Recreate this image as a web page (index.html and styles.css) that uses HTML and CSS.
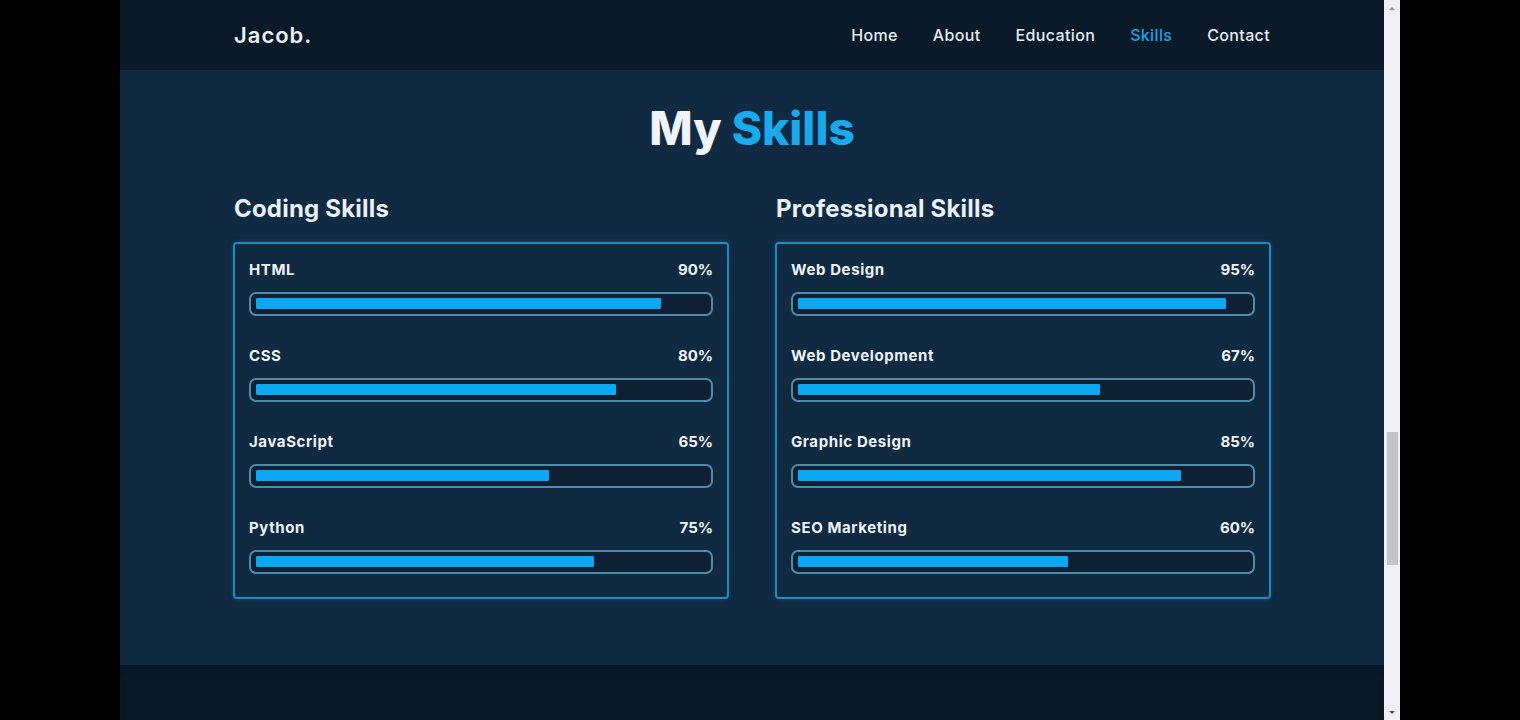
FILE: index.html
```html
<!DOCTYPE html>
<html lang="en">
<head>
<meta charset="utf-8">
<title>Jacob. - Skills</title>
<link rel="stylesheet" href="styles.css">
</head>
<body>
<div class="page">
  <header class="header">
    <div class="container header-inner">
      <a class="logo" href="#">Jacob.</a>
      <nav class="nav">
        <a href="#">Home</a>
        <a href="#">About</a>
        <a href="#">Education</a>
        <a href="#" class="active">Skills</a>
        <a href="#">Contact</a>
      </nav>
    </div>
  </header>
  <main class="skills">
    <h2 class="title">My <span>Skills</span></h2>
    <div class="container columns">
      <div class="column">
        <h3 class="col-title">Coding Skills</h3>
        <div class="box">
          <div class="skill">
            <div class="skill-head"><span>HTML</span><span>90%</span></div>
            <div class="bar"><div class="fill" style="width:90%"></div></div>
          </div>
          <div class="skill">
            <div class="skill-head"><span>CSS</span><span>80%</span></div>
            <div class="bar"><div class="fill" style="width:80%"></div></div>
          </div>
          <div class="skill">
            <div class="skill-head"><span>JavaScript</span><span>65%</span></div>
            <div class="bar"><div class="fill" style="width:65%"></div></div>
          </div>
          <div class="skill">
            <div class="skill-head"><span>Python</span><span>75%</span></div>
            <div class="bar"><div class="fill" style="width:75%"></div></div>
          </div>
        </div>
      </div>
      <div class="column">
        <h3 class="col-title">Professional Skills</h3>
        <div class="box">
          <div class="skill">
            <div class="skill-head"><span>Web Design</span><span>95%</span></div>
            <div class="bar"><div class="fill" style="width:95%"></div></div>
          </div>
          <div class="skill">
            <div class="skill-head"><span>Web Development</span><span>67%</span></div>
            <div class="bar"><div class="fill" style="width:67%"></div></div>
          </div>
          <div class="skill">
            <div class="skill-head"><span>Graphic Design</span><span>85%</span></div>
            <div class="bar"><div class="fill" style="width:85%"></div></div>
          </div>
          <div class="skill">
            <div class="skill-head"><span>SEO Marketing</span><span>60%</span></div>
            <div class="bar"><div class="fill" style="width:60%"></div></div>
          </div>
        </div>
      </div>
    </div>
  </main>
  <footer class="footer"></footer>
</div>
<div class="scrollbar">
  <div class="scroll-btn"><span class="arrow-up"></span></div>
  <div class="scroll-track"><div class="scroll-thumb"></div></div>
  <div class="scroll-btn"><span class="arrow-down"></span></div>
</div>
</body>
</html>
```
FILE: styles.css
```css
* { box-sizing: border-box; margin: 0; padding: 0; }
html, body { height: 720px; overflow: hidden; }
body {
  background: #000;
  display: flex;
  padding-left: 120px;
  font-family: "Inter", "Open Sans", sans-serif;
  color: #eef3f8;
}
.page {
  width: 1264px;
  height: 720px;
  display: flex;
  flex-direction: column;
  background: #102a42;
}
.container { width: 1038px; margin: 0 auto; }
.header {
  height: 70px;
  background: #0b1a29;
  display: flex;
  align-items: center;
}
.header-inner {
  display: flex;
  justify-content: space-between;
  align-items: center;
  padding: 0 1px 0 1px;
}
.logo {
  color: #e9eff6;
  text-decoration: none;
  font-size: 22px;
  font-weight: 600;
  letter-spacing: 1px;
}
.nav { display: flex; gap: 35px; }
.nav a {
  color: #e4ebf2;
  text-decoration: none;
  font-size: 16px;
  font-weight: 500;
  letter-spacing: 0.35px;
}
.nav a.active { color: #1ba6e6; }
.skills {
  height: 595px;
  padding-top: 30px;
  background: #102a42;
}
.title {
  text-align: center;
  font-size: 46px;
  line-height: 56px;
  font-weight: 800;
  color: #eef4fa;
}
.title span { color: #1ba9ec; }
.columns {
  margin-top: 38px;
  display: grid;
  grid-template-columns: 496px 496px;
  justify-content: space-between;
}
.col-title {
  font-size: 24px;
  line-height: 30px;
  font-weight: 700;
  color: #e9f0f7;
  letter-spacing: 0.2px;
  padding-left: 1px;
}
.box {
  margin-top: 18px;
  border: 2px solid #1f8cc0;
  border-radius: 4px;
  padding: 16px 14px 23px;
  display: flex;
  flex-direction: column;
  gap: 30px;
  box-shadow: 0 0 4px rgba(31, 140, 192, 0.35);
}
.skill-head {
  display: flex;
  justify-content: space-between;
  font-size: 15px;
  line-height: 20px;
  font-weight: 700;
  color: #eef3f8;
}
.skill-head span:first-child { letter-spacing: 0.6px; }
.bar {
  margin-top: 12px;
  height: 24px;
  border: 2px solid #4f8ca8;
  border-radius: 7px;
  background: #0d2034;
  padding: 3px 5px;
}
.fill {
  height: 11px;
  margin-top: 1px;
  background: #0aa7f2;
  border-radius: 1px;
}
.footer {
  flex: 1;
  background: #0a1a27;
  box-shadow: inset 0 8px 10px -4px rgba(0, 20, 40, 0.6);
}
.scrollbar {
  width: 16px;
  height: 720px;
  background: #eef0f6;
  display: flex;
  flex-direction: column;
}
.scroll-btn {
  height: 16px;
  display: flex;
  align-items: center;
  justify-content: center;
}
.arrow-up, .arrow-down {
  width: 0; height: 0;
  border-left: 3px solid transparent;
  border-right: 3px solid transparent;
}
.arrow-up { border-bottom: 3px solid #8a8c90; }
.arrow-down { border-top: 3px solid #505256; }
.scroll-track { flex: 1; padding-top: 416px; }
.scroll-thumb {
  width: 11px;
  margin-left: 3px;
  height: 133px;
  background: #c2c4c9;
}
```
